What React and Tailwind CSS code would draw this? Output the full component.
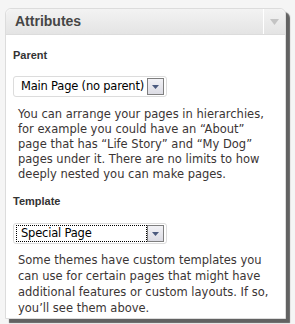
import React from "react";

const FakeSelect = ({ value, focused }) => (
  <div className="w-[154px] h-[21px] border border-[#dcdcdc] rounded-[3px] bg-white flex items-center pl-[2px] pr-[2px]">
    <div
      className={`flex-1 min-w-0 h-[17px] flex items-center pl-[4px] text-[11.5px] tracking-[-0.2px] text-black whitespace-nowrap ${
        focused ? "border border-dotted border-black" : "border border-transparent"
      }`}
    >
      {value}
    </div>
    <div className="w-[17px] h-[17px] shrink-0 border border-[#7f7f7f] bg-gradient-to-b from-[#f2f2f6] to-[#dcdce4] flex items-center justify-center">
      <svg width="7" height="4" viewBox="0 0 7 4">
        <path d="M0 0h7L3.5 4z" fill="#4b5a7e" />
      </svg>
    </div>
  </div>
);

export default function App() {
  return (
    <div
      className="w-[295px] h-[324px] bg-[#f5f5f5] pt-[8px] pl-[5px]"
      style={{ fontFamily: '"DejaVu Sans", Verdana, sans-serif' }}
    >
      <div className="w-[281px] h-[311px] bg-white border border-[#dcdcdc] rounded-t-[6px] shadow-[4px_4px_1px_rgba(0,0,0,0.6)] flex flex-col">
        {/* Header */}
        <div className="h-[26px] flex items-stretch rounded-t-[6px] bg-gradient-to-b from-[#f3f3f3] to-[#e4e4e4] border-b border-[#dcdcdc]">
          <h3 className="flex-1 flex items-center pl-[9px] font-['Liberation_Sans',Arial,sans-serif] text-[14px] font-bold text-[#464646]">
            Attributes
          </h3>
          <div className="w-[22px] border-l border-white flex items-center justify-center">
            <svg width="9" height="6" viewBox="0 0 9 6">
              <path d="M0 0h9L4.5 6z" fill="#c4c4c4" />
            </svg>
          </div>
        </div>

        {/* Body */}
        <div className="px-[7px] pt-[14px] text-[#3b3535]">
          <p className="font-['Liberation_Sans',Arial,sans-serif] text-[11px] font-bold leading-[13px] text-[#333]">
            Parent
          </p>
          <div className="mt-[14px]">
            <FakeSelect value="Main Page (no parent)" />
          </div>
          <p className="mt-[10px] pl-[5px] text-[11.5px] leading-[15px] whitespace-nowrap">
            You can arrange your pages in hierarchies,
            <br />
            for example you could have an “About”
            <br />
            page that has “Life Story” and “My Dog”
            <br />
            pages under it. There are no limits to how
            <br />
            deeply nested you can make pages.
          </p>

          <p className="mt-[13px] font-['Liberation_Sans',Arial,sans-serif] text-[11px] font-bold leading-[13px] text-[#333]">
            Template
          </p>
          <div className="mt-[15px]">
            <FakeSelect value="Special Page" focused />
          </div>
          <p className="mt-[8px] pl-[5px] text-[11.5px] leading-[16px] whitespace-nowrap">
            Some themes have custom templates you
            <br />
            can use for certain pages that might have
            <br />
            additional features or custom layouts. If so,
            <br />
            you’ll see them above.
          </p>
        </div>
      </div>
    </div>
  );
}
